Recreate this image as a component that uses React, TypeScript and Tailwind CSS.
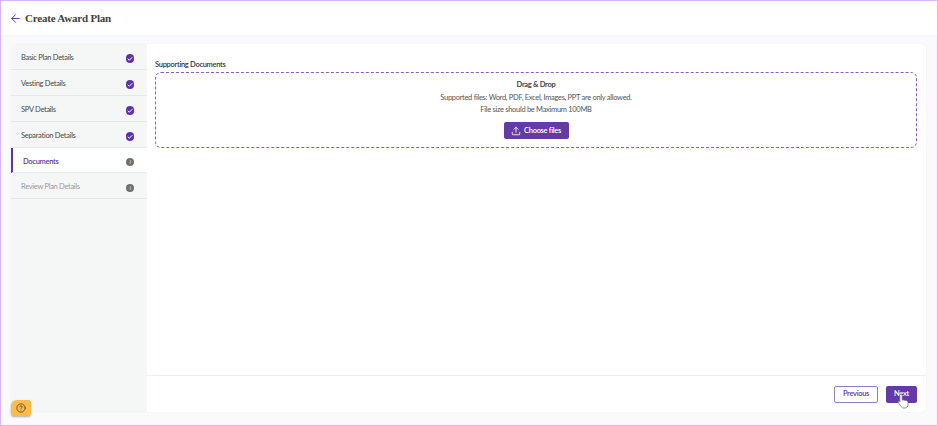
import React from 'react';
import { ArrowLeft, Check, Upload, CircleHelp } from 'lucide-react';

const steps = [
  { label: 'Basic Plan Details', state: 'done' },
  { label: 'Vesting Details', state: 'done' },
  { label: 'SPV Details', state: 'done' },
  { label: 'Separation Details', state: 'done' },
  { label: 'Documents', state: 'active' },
  { label: 'Review Plan Details', state: 'todo' },
];

const StepIcon: React.FC<{ state: string }> = ({ state }) => {
  if (state === 'done') {
    return (
      <span className="mt-[1px] flex h-[8.5px] w-[8.5px] items-center justify-center rounded-full bg-[#5f32ab]">
        <Check className="h-[6px] w-[6px] text-white" strokeWidth={4} />
      </span>
    );
  }
  return (
    <span className="mt-[1px] flex h-[8px] w-[8px] items-center justify-center rounded-full bg-[#6f6f6f] text-[6px] font-bold leading-none text-[#c8c8c8]">
      i
    </span>
  );
};

const App: React.FC = () => {
  return (
    <div className="flex h-[426px] w-[938px] flex-col overflow-hidden border border-[#d9b2f7] bg-[#fafafd] font-['Lato',sans-serif] text-[7.5px] tracking-[-0.3px]">
      <header className="flex h-[34px] shrink-0 items-center gap-[3px] bg-white pl-[8px] shadow-[0_1px_2px_rgba(0,0,0,0.03)]">
        <ArrowLeft className="h-[13px] w-[13px] text-[#5f32ab]" strokeWidth={1.8} />
        <h1 className="font-['Liberation_Serif',serif] text-[11px] font-bold tracking-[-0.2px] text-[#3f3f3f]">Create Award Plan</h1>
      </header>

      <main className="flex min-h-0 flex-1 pb-[13px] pl-[10px] pr-[11px] pt-[9px]">
        <div className="flex flex-1 overflow-hidden rounded-[5px] bg-white shadow-[0_0_2px_rgba(0,0,0,0.06)]">
          <aside className="w-[136px] shrink-0 bg-[#f5f6f6]">
            {steps.map((step) => (
              <div
                key={step.label}
                className={
                  step.state === 'active'
                    ? 'flex h-[25px] items-center justify-between border-b border-l-2 border-b-[#e9eaea] border-l-[#5f32ab] bg-white pl-[10px] pr-[13px] pt-[3px]'
                    : 'flex h-[26px] items-center justify-between border-b border-[#e6e7e7] pl-[10px] pr-[13px] pt-[3px]'
                }
              >
                <span
                  className={
                    step.state === 'active'
                      ? 'font-semibold text-[#5f32ab]'
                      : step.state === 'todo'
                        ? 'text-[#9a9a9a]'
                        : 'text-[#4a4a4a]'
                  }
                >
                  {step.label}
                </span>
                <StepIcon state={step.state} />
              </div>
            ))}
          </aside>

          <section className="flex min-w-0 flex-1 flex-col">
            <div className="flex-1 pl-[8px] pr-[9px] pt-[16px]">
              <p className="font-semibold leading-[10px] text-[#333]">Supporting Documents</p>
              <div className="mt-[2px] flex h-[76px] flex-col items-center rounded-[6px] border border-dashed border-[#8560c2] pt-[6px]">
                <p className="font-bold leading-[12px] text-[#444]">Drag &amp; Drop</p>
                <p className="mt-[1px] leading-[11px] text-[#555]">
                  Supported files: Word, PDF, Excel, Images, PPT are only allowed.
                </p>
                <p className="mt-[1px] leading-[11px] text-[#555]">File size should be Maximum 100MB</p>
                <button className="mt-[7px] flex h-[17px] w-[65px] items-center justify-center gap-[3px] rounded-[2px] bg-[#643aa8] font-semibold text-white">
                  <Upload className="h-[10px] w-[10px]" strokeWidth={2} />
                  Choose files
                </button>
              </div>
            </div>

            <footer className="flex h-[37px] shrink-0 items-center justify-end gap-[8px] border-t border-[#efeff2] pr-[9px]">
              <button className="h-[17px] w-[44px] rounded-[2px] border border-[#8f7fb5] bg-white font-semibold text-[#5f32ab]">
                Previous
              </button>
              <button className="h-[17px] w-[31px] rounded-[2px] bg-[#643aa8] font-semibold text-white">
                Next
              </button>
            </footer>
          </section>
        </div>
      </main>

      <button className="absolute left-[11px] top-[400px] flex h-[16px] w-[20px] items-center justify-center rounded-[3px] rounded-tl-[6px] bg-[#fbbc4a] shadow-[0_1px_2px_rgba(0,0,0,0.3)]">
        <CircleHelp className="h-[10px] w-[10px] text-[#54492f]" strokeWidth={2} />
      </button>

      <svg className="absolute left-[897px] top-[393px] h-[16px] w-[13px]" viewBox="0 0 13 16">
        <path
          d="M4 1.2c.7 0 1.2.5 1.2 1.2v4.4l4 .8c1 .2 1.8 1 1.8 2v2.2c0 1.8-1.2 3.2-3 3.2H6.6c-1 0-1.8-.5-2.4-1.3L1.4 9.8c-.4-.6-.2-1.2.3-1.5.5-.3 1.1-.2 1.5.3l-.4.1V2.4C2.8 1.7 3.3 1.2 4 1.2z"
          fill="#fff"
          stroke="#666"
          strokeWidth="0.7"
        />
      </svg>
    </div>
  );
};

export default App;
